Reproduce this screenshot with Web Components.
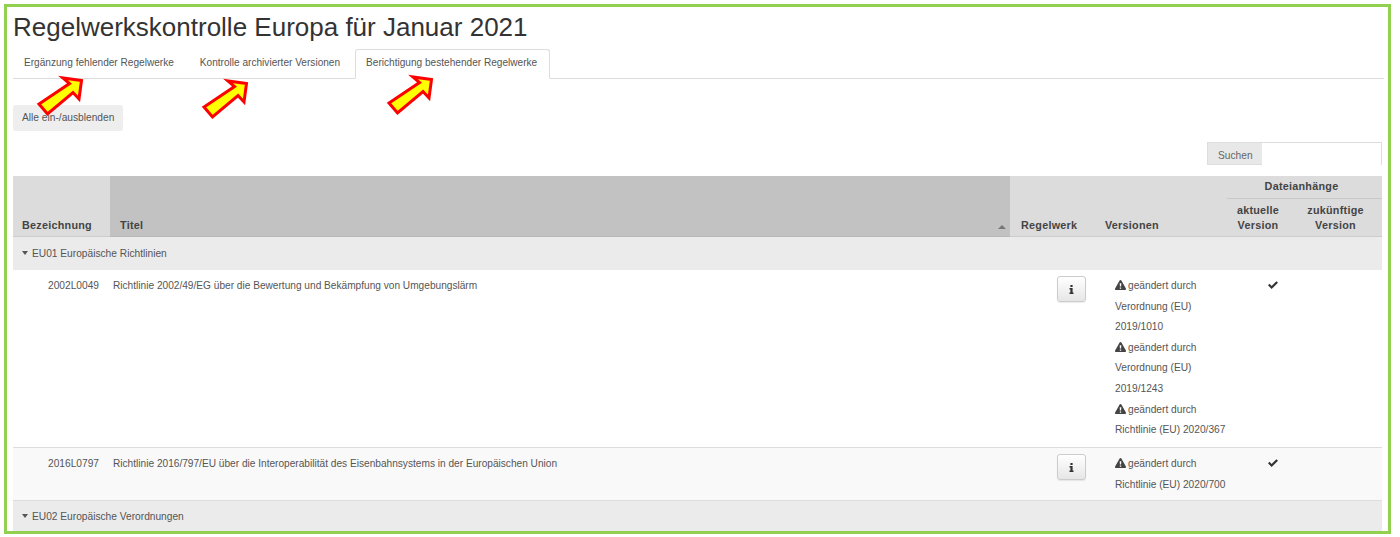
<!DOCTYPE html>
<html lang="de">
<head>
<meta charset="utf-8">
<title>Regelwerkskontrolle</title>
<style>
    html, body { margin: 0; padding: 0; background: #fff; }
    body {
        font-family: "Liberation Sans", Arial, sans-serif;
        font-size: 10.2px;
        color: #555;
        --cols: 97px 900px 86px 131px 62px 93px;
    }
</style>
</head>
<body>
<rw-frame>
    <rw-title>Regelwerkskontrolle Europa für Januar 2021</rw-title>
    <rw-tabs>
        <rw-tab>Ergänzung fehlender Regelwerke</rw-tab>
        <rw-tab>Kontrolle archivierter Versionen</rw-tab>
        <rw-tab active>Berichtigung bestehender Regelwerke</rw-tab>
    </rw-tabs>
    <rw-button>Alle ein-/ausblenden</rw-button>
    <rw-search></rw-search>
    <rw-head></rw-head>
    <rw-group>EU01 Europäische Richtlinien</rw-group>
    <rw-row code="2002L0049" height="178">
        Richtlinie 2002/49/EG über die Bewertung und Bekämpfung von Umgebungslärm
        <rw-change slot="versions">Verordnung (EU) 2019/1010</rw-change>
        <rw-change slot="versions">Verordnung (EU) 2019/1243</rw-change>
        <rw-change slot="versions">Richtlinie (EU) 2020/367</rw-change>
    </rw-row>
    <rw-row code="2016L0797" height="53" striped>
        Richtlinie 2016/797/EU über die Interoperabilität des Eisenbahnsystems in der Europäischen Union
        <rw-change slot="versions">Richtlinie (EU) 2020/700</rw-change>
    </rw-row>
    <rw-group style="padding-bottom:3px">EU02 Europäische Verordnungen</rw-group>
    <rw-arrow style="left:28px;top:66px"></rw-arrow>
    <rw-arrow style="left:193px;top:69px"></rw-arrow>
    <rw-arrow style="left:378px;top:65px"></rw-arrow>
</rw-frame>

<script>
    function define(name, html, extra) {
        customElements.define(name, class extends HTMLElement {
            constructor() {
                super();
                this.attachShadow({ mode: 'open' }).innerHTML = html;
                if (extra) extra(this);
            }
        });
    }

    define('rw-frame', `
        <style>
            :host {
                display: block;
                box-sizing: border-box;
                position: relative;
                margin: 4px 0 0 4px;
                width: 1387px;
                height: 530px;
                border: 3px solid #92d050;
                padding: 6px 4px 0 6px;
                overflow: hidden;
            }
        </style>
        <slot></slot>`);

    define('rw-title', `
        <style>
            :host { display: block; font-size: 26px; line-height: 29px; color: #333; }
        </style>
        <slot></slot>`);

    define('rw-tabs', `
        <style>
            :host {
                display: flex;
                height: 29px;
                margin-top: 7px;
                border-bottom: 1px solid #ddd;
            }
        </style>
        <slot></slot>`);

    define('rw-tab', `
        <style>
            :host {
                display: block;
                box-sizing: border-box;
                height: 30px;
                padding: 6px 12px 0 10px;
                line-height: 14px;
                margin-right: 2px;
                font-size: 10.1px;
                color: #555;
                white-space: nowrap;
                border: 1px solid transparent;
                border-radius: 3px 3px 0 0;
            }
            :host([active]) {
                border-color: #ddd;
                border-bottom-color: #fff;
                background: #fff;
            }
        </style>
        <slot></slot>`);

    define('rw-button', `
        <style>
            :host {
                display: block;
                box-sizing: border-box;
                width: 110px;
                height: 26px;
                margin-top: 26px;
                padding-left: 9px;
                line-height: 25px;
                background: #eee;
                border-radius: 3px;
                color: #555;
                white-space: nowrap;
            }
        </style>
        <slot></slot>`);

    define('rw-search', `
        <style>
            :host { display: flex; justify-content: flex-end; margin-top: 11px; height: 23px; width: 1369px; }
            .label {
                box-sizing: border-box;
                width: 55px;
                padding-left: 10px;
                line-height: 26px;
                background: #e8e8e8;
                border: 1px solid #ddd;
                border-right: 0;
                color: #666;
            }
            input {
                box-sizing: border-box;
                width: 120px;
                height: 23px;
                margin: 0;
                border: 0;
                border-top: 1px solid #ddd;
                border-right: 1px solid #ddd;
                background: #fff;
                outline: 0;
            }
        </style>
        <div class="label">Suchen</div><input type="text" aria-label="Suchen">`);

    define('rw-head', `
        <style>
            :host {
                display: grid;
                grid-template-columns: var(--cols);
                grid-template-rows: 23px 38px;
                margin-top: 11px;
                width: 1369px;
                background: #dcdcdc;
                font-weight: bold;
                letter-spacing: .25px;
                color: #444;
                font-size: 10.8px;
                box-shadow: inset 0 -1px 0 #ccc;
            }
            .th {
                grid-row: 1 / 3;
                display: flex;
                align-items: flex-end;
                padding: 0 0 5px 9px;
                line-height: 14px;
            }
            .sorted { background: #c2c2c2; justify-content: space-between; padding: 0 4px 5px 10px; box-shadow: inset 0 -1px 0 #b8b8b8; }
            .sorted svg { margin-bottom: 3px; }
            .wide { padding-left: 11px; }
            .group {
                grid-column: 5 / 7;
                text-align: center;
                line-height: 21px;
                padding-right: 6px;
                border-bottom: 1px solid #c8c8c8;
            }
            .sub {
                text-align: center;
                line-height: 15px;
                padding-top: 4px;
            }
        </style>
        <div class="th">Bezeichnung</div>
        <div class="th sorted">Titel
            <svg width="8" height="4" viewBox="0 0 8 4"><path d="M0 4 4 0 8 4z" fill="#777"/></svg>
        </div>
        <div class="th wide">Regelwerk</div>
        <div class="th">Versionen</div>
        <div class="group">Dateianhänge</div>
        <div class="sub" style="grid-column:5;grid-row:2">aktuelle<br>Version</div>
        <div class="sub" style="grid-column:6;grid-row:2">zukünftige<br>Version</div>`);

    define('rw-group', `
        <style>
            :host {
                display: flex;
                align-items: center;
                box-sizing: border-box;
                width: 1369px;
                height: 33px;
                padding: 0 0 1px 9px;
                gap: 4px;
                background: #ebebeb;
                color: #555;
            }
            svg { flex: none; }
        </style>
        <svg width="6" height="4" viewBox="0 0 6 4"><path d="M0 0H6L3 4z" fill="#555"/></svg>
        <span><slot></slot></span>`);

    define('rw-row', `
        <style>
            :host {
                display: grid;
                grid-template-columns: var(--cols);
                box-sizing: border-box;
                width: 1369px;
                border-bottom: 1px solid #ddd;
                background: #fff;
                color: #555;
            }
            :host([striped]) { background: #f9f9f9; }
            .code { text-align: right; padding: 9px 11px 0 0; line-height: 14px; }
            .title { padding: 9px 0 0 3px; line-height: 14px; font-size: 10.15px; }
            .btn {
                box-sizing: border-box;
                width: 29px;
                height: 26px;
                margin: 6px 0 0 47px;
                display: flex;
                align-items: center;
                justify-content: center;
                border: 1px solid #ccc;
                border-radius: 3px;
                background: linear-gradient(#fff, #e6e6e6);
                box-shadow: 0 1px 1px rgba(0,0,0,.08);
            }
            .versions { padding: 6px 0 0 19px; line-height: 20.6px; }
            .check { padding: 10px 0 0 41px; }
        </style>
        <div class="code"></div>
        <div class="title"><slot></slot></div>
        <div><div class="btn">
            <svg width="5" height="9" viewBox="0 0 5 9"><path d="M1.400 0H3.600V1.900H1.400ZM.5 3H3.600V7.500H4.500V9H.5V7.500H1.400V4.500H.5Z" fill="#333"/></svg>
        </div></div>
        <div class="versions"><slot name="versions"></slot></div>
        <div class="check">
            <svg width="10" height="8" viewBox="0 0 10 8"><path d="M0 4.300 1.500 2.800 3.600 4.900 8.400 .2 10 1.700 3.600 8z" fill="#333"/></svg>
        </div>
        <div></div>`, el => {
        el.shadowRoot.querySelector('.code').textContent = el.getAttribute('code');
        el.style.height = el.getAttribute('height') + 'px';
    });

    define('rw-change', `
        <style>
            :host { display: block; }
            svg { vertical-align: -1px; margin-right: 2px; }
        </style>
        <svg width="11" height="10" viewBox="0 0 11 10"><path fill-rule="evenodd" d="M5.500 0C5.900 0 6.200.2 6.400.5L10.900 8.500C11.200 9.200 10.800 10 10 10H1C.2 10-.2 9.200.1 8.500L4.600.5C4.800.2 5.100 0 5.500 0ZM4.700 3.200 4.900 6.600H6.100L6.300 3.200ZM4.800 7.400V8.800H6.200V7.400Z" fill="#444"/></svg>geändert durch <slot></slot>`);

    define('rw-arrow', `
        <style>
            :host { display: block; position: absolute; width: 54px; height: 46px; }
            svg { display: block; }
        </style>
        <svg width="54" height="46" viewBox="0 0 54 46">
            <path d="M46.500 7.500 28 5 34.500 10.500 4 31 12.500 41 38 19.500 44 26z" fill="#ff0" stroke="#f00" stroke-width="3" stroke-linejoin="miter"/>
        </svg>`);
</script>
</body>
</html>
